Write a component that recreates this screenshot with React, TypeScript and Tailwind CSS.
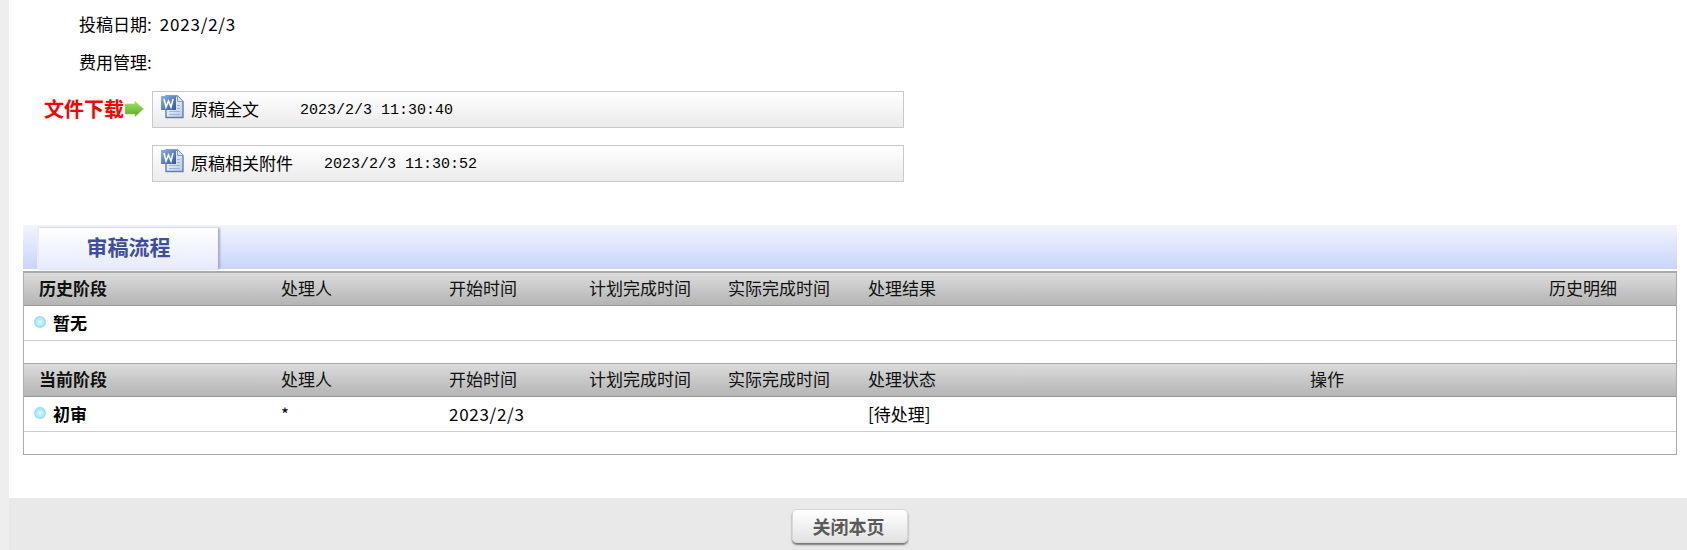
const sans = "font-['Noto_Sans_CJK_SC','Liberation_Sans',sans-serif]";

function WordIcon() {
  return (
    <svg width="23" height="24" viewBox="0 0 23 24" className="shrink-0">
      <defs>
        <linearGradient id="page" x1="0" y1="0" x2="1" y2="1">
          <stop offset="0" stopColor="#ffffff" />
          <stop offset="1" stopColor="#b9cbe4" />
        </linearGradient>
        <linearGradient id="badge" x1="0" y1="0" x2="1" y2="1">
          <stop offset="0" stopColor="#8fb2e6" />
          <stop offset="1" stopColor="#2f55a8" />
        </linearGradient>
      </defs>
      <path d="M5 1H16.5L22 6.5V22.5H5Z" fill="url(#page)" stroke="#5f80ad" strokeWidth="1.4" />
      <path d="M16.5 1V6.5H22" fill="#dbe6f5" stroke="#7f9cc4" />
      <path d="M8 19.5H19M8 16.5H19M16 13.5H19M16 10.5H19" stroke="#9db4d4" />
      <rect x="0" y="1" width="15" height="14" fill="url(#badge)" />
      <path d="M3 4L5 12L7.5 6L10 12L12 4" fill="none" stroke="#ffffff" strokeWidth="1.5" />
    </svg>
  );
}

function GreenArrow() {
  return (
    <svg width="20" height="16" viewBox="0 0 20 16" className="shrink-0">
      <defs>
        <linearGradient id="arrow" x1="0" y1="0" x2="0" y2="1">
          <stop offset="0" stopColor="#a4e35c" />
          <stop offset="1" stopColor="#58a82a" />
        </linearGradient>
      </defs>
      <path d="M1 3H11V.4L19.5 8L11 15.6V13H1Z" fill="url(#arrow)" stroke="#9ad266" strokeWidth=".6" />
    </svg>
  );
}

function Dot() {
  return <span className="-mt-[2px] h-[12px] w-[12px] shrink-0 rounded-full bg-[radial-gradient(circle,#def6ff_10%,#9fe6fc_55%,#5ccdf8_100%)]" />;
}

function FileRow({ name, time, gap }: { name: string; time: string; gap: string }) {
  return (
    <div className="flex h-[37px] w-[752px] items-start border border-[#c9c9c9] bg-gradient-to-b from-white to-[#ebebeb] pl-[8px] pt-[3px]">
      <WordIcon />
      <span className="mt-[2px] ml-[7px] text-[17px] leading-[24px] text-black">{name}</span>
      <span className={`mt-[4px] font-['Liberation_Mono',monospace] text-[15px] leading-[24px] text-black ${gap}`}>{time}</span>
    </div>
  );
}

function HeaderRow({ first, labels, lastWidth, last }: { first: string; labels: string[]; lastWidth: string; last: string }) {
  return (
    <div className="flex h-[33px] items-center border-b border-[#999] bg-gradient-to-b from-[#dcdcdc] to-[#b4b4b4] pb-[2px] text-[17px] text-[#111]">
      <span className="w-[257px] shrink-0 pl-[15px] font-bold">{first}</span>
      <span className="w-[168px] shrink-0">{labels[0]}</span>
      <span className="w-[140px] shrink-0">{labels[1]}</span>
      <span className="w-[139px] shrink-0">{labels[2]}</span>
      <span className="w-[140px] shrink-0">{labels[3]}</span>
      <span className={`shrink-0 ${lastWidth}`}>{labels[4]}</span>
      <span>{last}</span>
    </div>
  );
}

function StageRow({ name, person, start, status }: { name: string; person?: string; start?: string; status?: string }) {
  return (
    <div className="flex h-[35px] items-center border-b border-[#ccc] pb-[1px] text-[17px] text-black">
      <span className="flex w-[257px] shrink-0 items-center gap-[7px] pl-[10px] font-bold">
        <Dot />
        {name}
      </span>
      <span className="w-[168px] shrink-0">{person}</span>
      <span className="w-[419px] shrink-0 tracking-[0.7px]">{start}</span>
      <span>{status}</span>
    </div>
  );
}

export default function App() {
  return (
    <div className={`flex h-[550px] w-[1687px] overflow-hidden bg-[#eeeeee] ${sans}`}>
      <div className="w-[9px] shrink-0" />
      <div className="flex min-w-0 flex-1 flex-col bg-white">
        <div className="h-[498px] pt-[11px]">
          <div className="flex h-[26px] items-center pl-[70px] text-[17px] text-black">
            <span>投稿日期:</span>
            <span className="ml-[8px] tracking-[0.8px]">2023/2/3</span>
          </div>
          <div className="mt-[12px] flex h-[26px] items-center pl-[70px] text-[17px] text-black">费用管理:</div>
          <div className="mt-[16px] flex items-start pl-[35px]">
            <div className="flex w-[108px] items-center pt-[3px]">
              <span className="text-[20px] leading-[29px] font-bold text-[#ff0000]">文件下载</span>
              <GreenArrow />
            </div>
            <FileRow name="原稿全文" time="2023/2/3 11:30:40" gap="ml-[41px]" />
          </div>
          <div className="mt-[17px] pl-[143px]">
            <FileRow name="原稿相关附件" time="2023/2/3 11:30:52" gap="ml-[31px]" />
          </div>

          <div className="mt-[43px] ml-[14px] mr-[10px]">
            <div className="flex h-[44px] items-end bg-gradient-to-b from-[#f3f4fe] to-[#c8d4fb] pl-[14px]">
              <div className="flex h-[41px] w-[181px] items-center justify-center border-l-2 border-l-[#e8ebfa] bg-gradient-to-b from-white to-[#e6eafc] pb-[3px] text-[21px] font-bold text-[#3f4d9e] shadow-[2px_0_2px_#a2a8d0]">
                审稿流程
              </div>
            </div>
            <div className="mt-[2px] border border-t-2 border-[#aaaaaa]">
              <HeaderRow
                first="历史阶段"
                labels={["处理人", "开始时间", "计划完成时间", "实际完成时间", "处理结果"]}
                lastWidth="w-[681px]"
                last="历史明细"
              />
              <StageRow name="暂无" />
              <div className="h-[23px] border-b border-[#a6a6a6]" />
              <HeaderRow
                first="当前阶段"
                labels={["处理人", "开始时间", "计划完成时间", "实际完成时间", "处理状态"]}
                lastWidth="w-[442px]"
                last="操作"
              />
              <StageRow name="初审" person="*" start="2023/2/3" status="[待处理]" />
              <div className="h-[22px]" />
            </div>
          </div>
        </div>
        <div className="flex h-[52px] justify-center bg-[#e9e9e9] pt-[11px]">
          <button className="ml-[3px] h-[34px] w-[116px] rounded-[5px] border border-[#d8d8d8] bg-gradient-to-b from-white to-[#e2e2e2] pr-[2px] text-[18px] font-bold text-[#5a5a5a] shadow-[0_2px_2px_#777]">
            关闭本页
          </button>
        </div>
      </div>
    </div>
  );
}
